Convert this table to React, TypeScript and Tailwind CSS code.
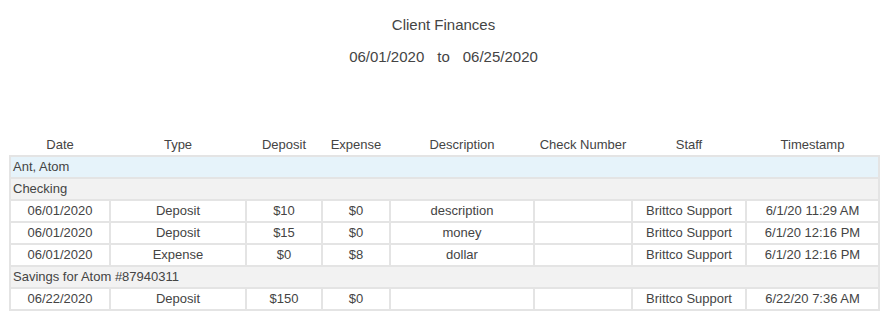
import React from 'react';

type Entry = {
  date: string;
  type: string;
  deposit: string;
  expense: string;
  description: string;
  check: string;
  staff: string;
  timestamp: string;
};

type Account = { name: string; entries: Entry[] };

const accounts: Account[] = [
  {
    name: 'Checking',
    entries: [
      { date: '06/01/2020', type: 'Deposit', deposit: '$10', expense: '$0', description: 'description', check: '', staff: 'Brittco Support', timestamp: '6/1/20 11:29 AM' },
      { date: '06/01/2020', type: 'Deposit', deposit: '$15', expense: '$0', description: 'money', check: '', staff: 'Brittco Support', timestamp: '6/1/20 12:16 PM' },
      { date: '06/01/2020', type: 'Expense', deposit: '$0', expense: '$8', description: 'dollar', check: '', staff: 'Brittco Support', timestamp: '6/1/20 12:16 PM' },
    ],
  },
  {
    name: 'Savings for Atom #87940311',
    entries: [
      { date: '06/22/2020', type: 'Deposit', deposit: '$150', expense: '$0', description: '', check: '', staff: 'Brittco Support', timestamp: '6/22/20 7:36 AM' },
    ],
  },
];

const columns = [
  { label: 'Date', width: 'w-[100px]' },
  { label: 'Type', width: 'w-[136px]' },
  { label: 'Deposit', width: 'w-[76px]' },
  { label: 'Expense', width: 'w-[68px]' },
  { label: 'Description', width: 'w-[144px]' },
  { label: 'Check Number', width: 'w-[98px]' },
  { label: 'Staff', width: 'w-[114px]' },
  { label: 'Timestamp', width: 'w-[133px]' },
];

const cell = 'border-2 border-[#e4e4e4] h-[22px] p-0 text-center leading-[18px]';

const App: React.FC = () => {
  return (
    <div className="min-h-screen bg-white text-[#444] font-['Liberation_Sans',Arial,sans-serif]">
      <div className="ml-[9px] w-[869px] pt-[16px]">
        {/* Heading */}
        <div className="text-center text-[15px] leading-[18px]">Client Finances</div>
        <div className="mt-[14px] text-center text-[15px] leading-[18px]">
          06/01/2020<span className="mx-[13px]">to</span>06/25/2020
        </div>

        {/* Ledger */}
        <table className="mt-[69px] w-[869px] table-fixed border-collapse text-[13px]">
          <colgroup>
            {columns.map(c => (
              <col key={c.label} className={c.width} />
            ))}
          </colgroup>
          <thead>
            <tr className="h-[21px]">
              {columns.map(c => (
                <th key={c.label} className="p-0 font-normal text-center leading-[18px]">
                  {c.label}
                </th>
              ))}
            </tr>
          </thead>
          <tbody>
            <tr className="bg-[#e6f3fa]">
              <td colSpan={8} className={`${cell} text-left pl-[2px]`}>Ant, Atom</td>
            </tr>
            {accounts.map(acct => (
              <React.Fragment key={acct.name}>
                <tr className="bg-[#f2f2f2]">
                  <td colSpan={8} className={`${cell} text-left pl-[2px]`}>{acct.name}</td>
                </tr>
                {acct.entries.map((e, i) => (
                  <tr key={i}>
                    <td className={cell}>{e.date}</td>
                    <td className={cell}>{e.type}</td>
                    <td className={cell}>{e.deposit}</td>
                    <td className={cell}>{e.expense}</td>
                    <td className={cell}>{e.description}</td>
                    <td className={cell}>{e.check}</td>
                    <td className={cell}>{e.staff}</td>
                    <td className={cell}>{e.timestamp}</td>
                  </tr>
                ))}
              </React.Fragment>
            ))}
          </tbody>
        </table>
      </div>
    </div>
  );
};

export default App;
